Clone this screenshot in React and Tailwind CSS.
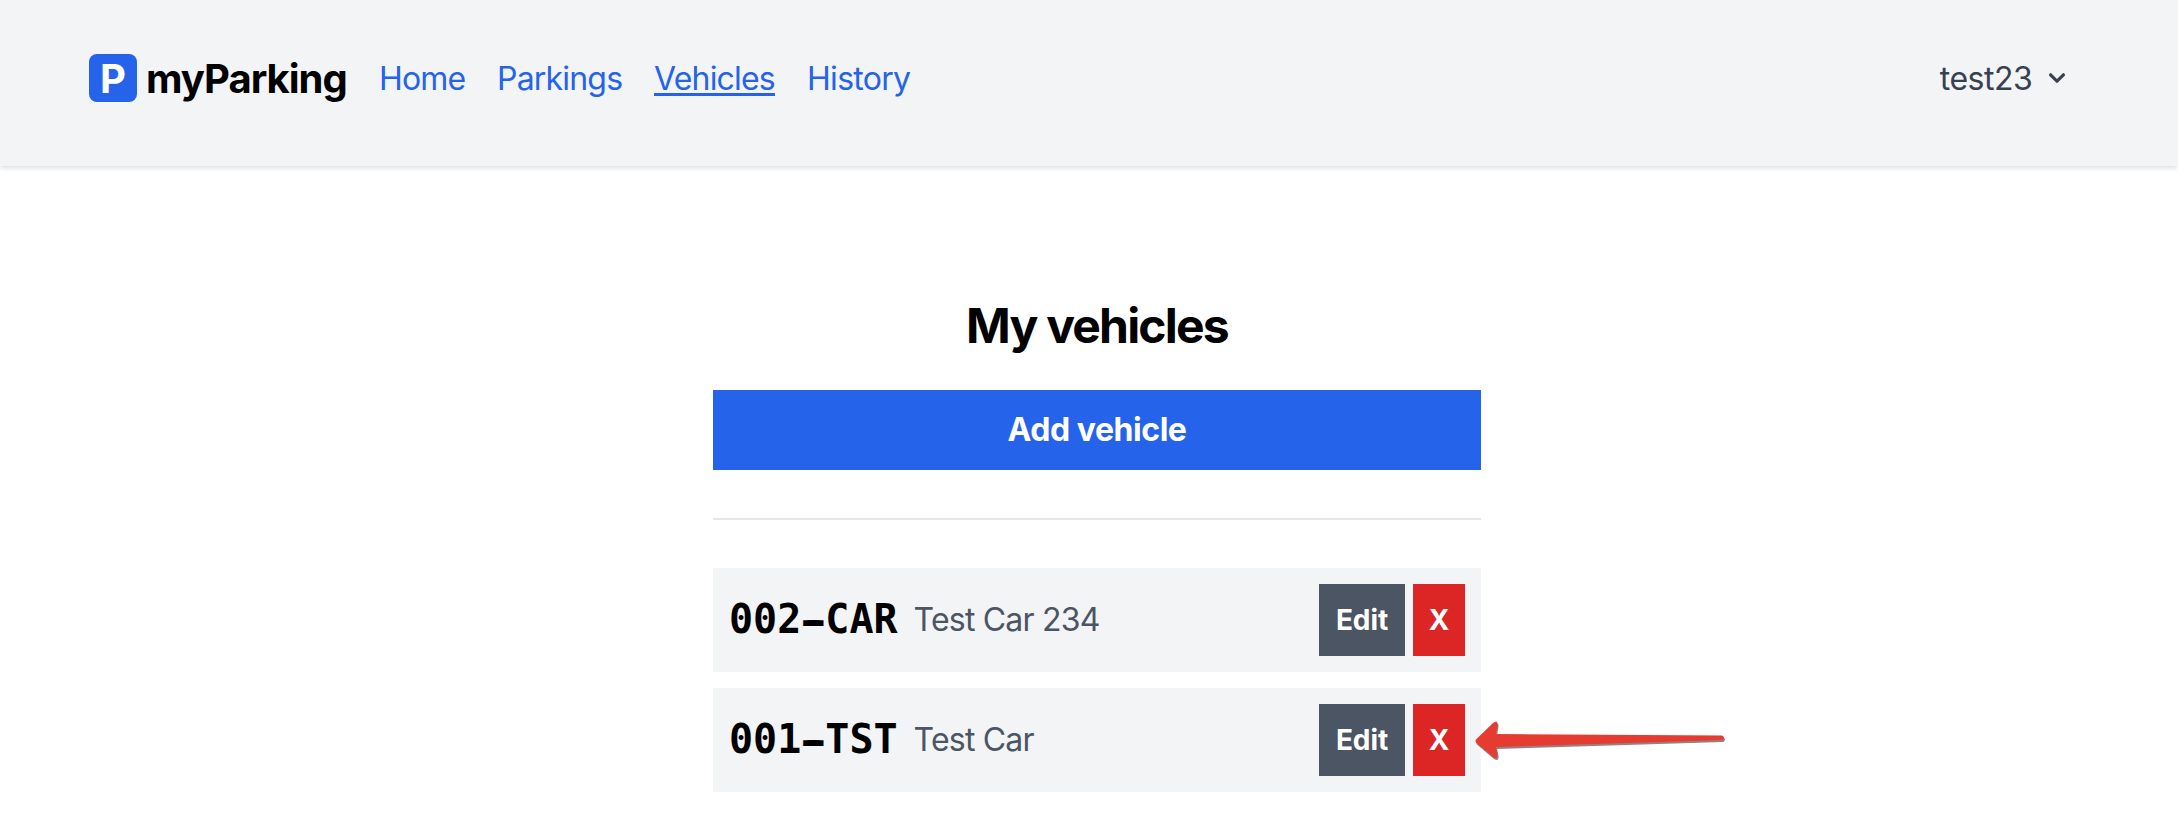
const vehicles = [
  { plate: ["002", "CAR"], description: "Test Car 234" },
  { plate: ["001", "TST"], description: "Test Car", highlighted: true },
];

function Header() {
  return (
    <header className="flex h-[166px] items-start justify-between bg-[#f3f4f6] pt-12 pr-[105px] pl-[89px] shadow-[0_2px_6px_rgba(0,0,0,0.08),0_2px_4px_rgba(0,0,0,0.06)]">
      <div className="flex h-[60px] items-center">
        <div className="flex items-center gap-2">
          <div className="flex size-12 items-center justify-center rounded-lg bg-[#2563eb] pt-px text-[40px] leading-none font-bold text-white">
            P
          </div>
          <span className="w-[202px] pt-px pl-px text-[40px] leading-none font-bold tracking-[-1px] whitespace-nowrap">
            myParking
          </span>
        </div>
        <nav className="ml-8 flex gap-8 pt-0.5 text-[32px] leading-[48px] text-[#2563eb]">
          <a className="w-[86px] tracking-[-0.8px] whitespace-nowrap">Home</a>
          <a className="w-[125px] tracking-[-0.8px] whitespace-nowrap">Parkings</a>
          <a className="w-[121px] tracking-[-0.8px] whitespace-nowrap underline decoration-[3px] underline-offset-[3px]">Vehicles</a>
          <a className="w-[104px] tracking-[-0.7px] whitespace-nowrap">History</a>
        </nav>
      </div>
      <button className="flex h-[60px] items-center gap-2 text-[32px] leading-[48px] text-[#374151]">
        <span className="w-[94px] pt-0.5 tracking-[-0.5px] whitespace-nowrap">test23</span>
        <svg className="size-8" viewBox="0 0 20 20" fill="currentColor">
          <path
            fillRule="evenodd"
            d="M5.293 7.293a1 1 0 011.414 0L10 10.586l3.293-3.293a1 1 0 111.414 1.414l-4 4a1 1 0 01-1.414 0l-4-4a1 1 0 010-1.414z"
          />
        </svg>
      </button>
    </header>
  );
}

function Arrow() {
  return (
    <svg className="absolute top-[13px] left-[760px] h-16 w-[260px]" viewBox="0 0 260 64" fill="none">
      <path
        className="drop-shadow-[1px_2px_0.6px_rgba(70,20,20,0.55)]"
        d="M3 38.5 L20 22 Q25 18 24.5 24 L23 33 L249 34.5 Q253 36.5 249 39 L23 46 L24.5 53 Q25 59 20 56 L3 41.5 Q2 40 3 38.5Z"
        fill="#e63b31"
      />
    </svg>
  );
}

function VehicleRow({ plate, description, highlighted }) {
  return (
    <div className="relative flex h-[104px] items-center justify-between bg-[#f3f4f6] p-4">
      <div className="flex items-center gap-4">
        <div className="pb-0.5 font-['DejaVu_Sans_Mono',monospace] text-[40px] leading-[56px] font-bold">
          {plate[0]}
          <span className="inline-block translate-y-0.5 [text-shadow:-4px_0_0_#000,4px_0_0_#000]">-</span>
          {plate[1]}
        </div>
        <div className="text-[32px] leading-[48px] tracking-[-0.8px] text-[#4b5563]">{description}</div>
      </div>
      <div className="flex gap-2 text-[28px] leading-[40px] font-bold text-white">
        <button className="h-[72px] w-[86px] bg-[#4b5563] tracking-[-0.1px]">Edit</button>
        <button className="h-[72px] w-[52px] bg-[#dc2626]">X</button>
      </div>
      {highlighted && <Arrow />}
    </div>
  );
}

export default function App() {
  return (
    <div className="h-[838px] overflow-hidden bg-white font-[Inter,sans-serif] text-black">
      <Header />
      <main className="ml-[713px] flex w-[768px] flex-col pt-[128px]">
        <h1 className="text-center text-[48px] leading-[64px] font-bold tracking-[-1.8px]">My vehicles</h1>
        <button className="mt-8 h-20 bg-[#2563eb] text-[32px] leading-[48px] font-bold tracking-[-0.45px] text-white">
          Add vehicle
        </button>
        <div className="mt-12 h-0.5 bg-[#e5e7eb]" />
        <div className="mt-12 flex flex-col gap-4">
          {vehicles.map((vehicle) => (
            <VehicleRow key={vehicle.plate[0]} {...vehicle} />
          ))}
        </div>
      </main>
    </div>
  );
}
